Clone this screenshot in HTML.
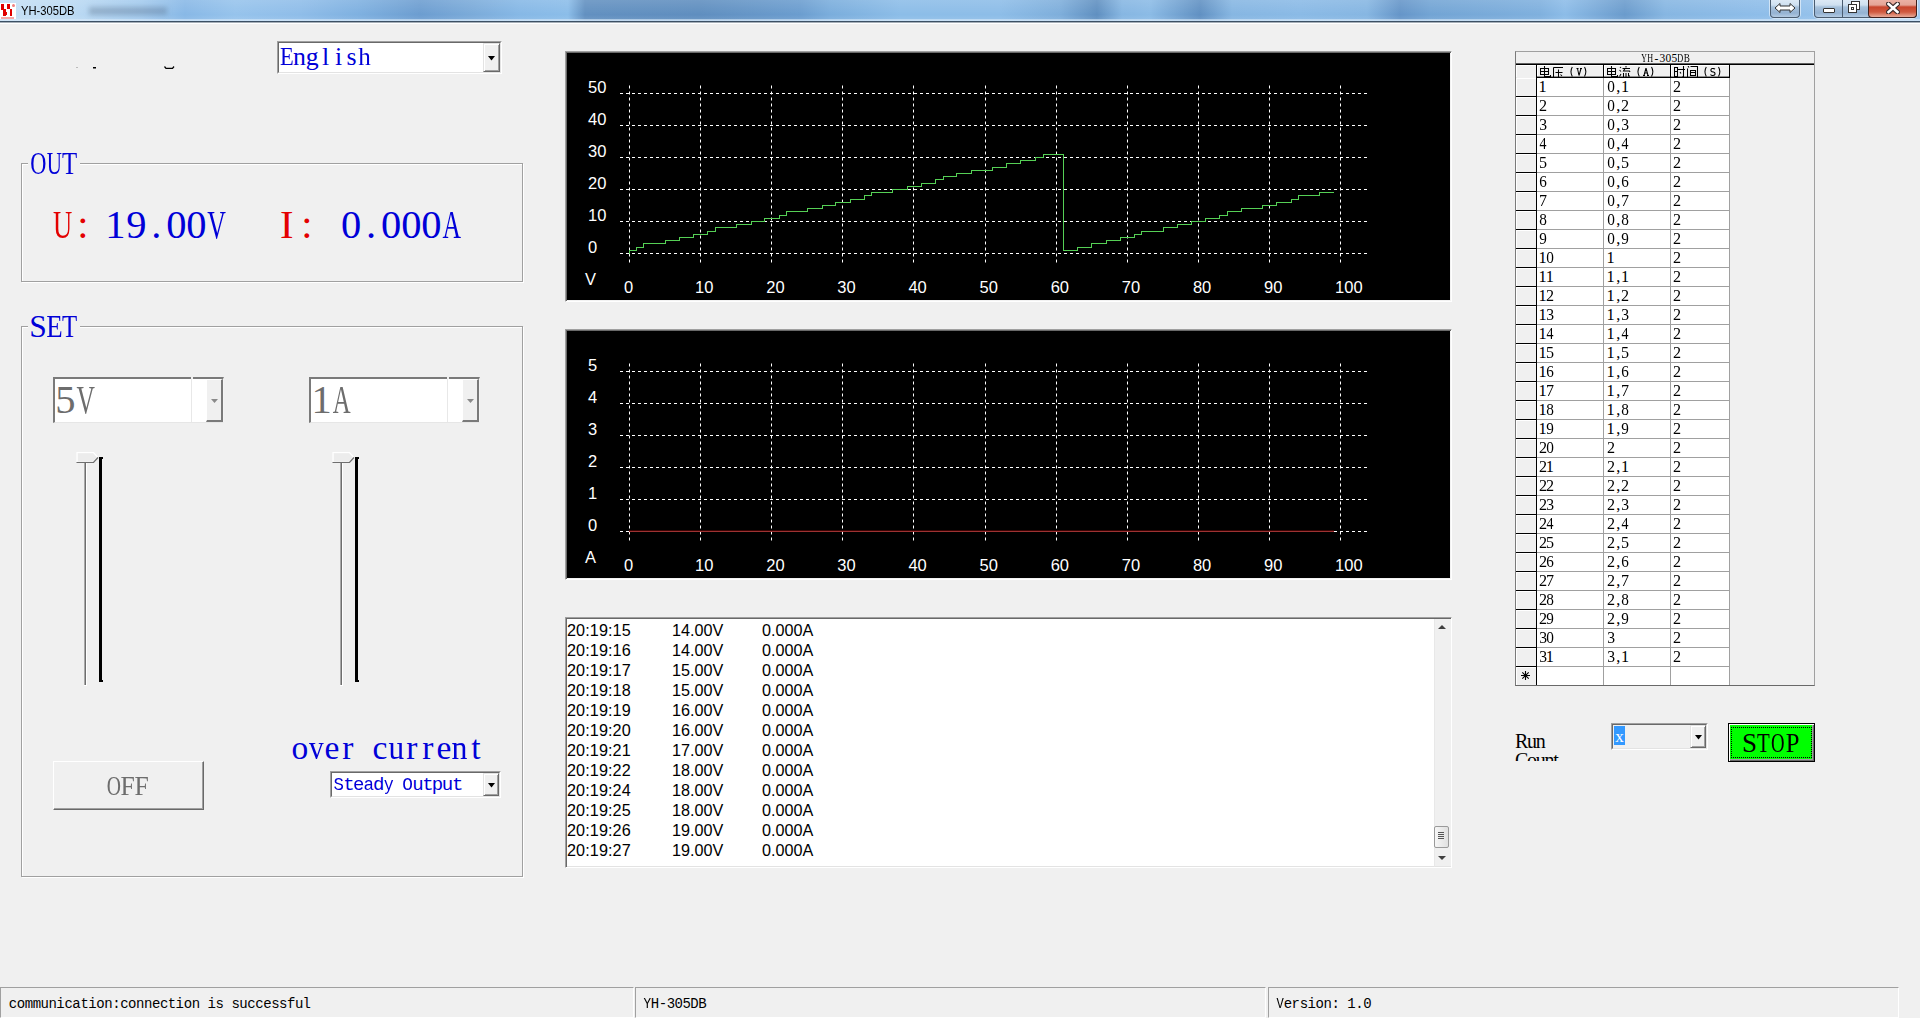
<!DOCTYPE html>
<html><head><meta charset="utf-8"><title>YH-305DB</title><style>
*{margin:0;padding:0;box-sizing:border-box}
html,body{width:1920px;height:1018px;overflow:hidden;background:#f0f0f0;position:relative}
.a{position:absolute}
.sans{font-family:"Liberation Sans",sans-serif}
.serif{font-family:"Liberation Serif",serif}
.mono{font-family:"Liberation Mono",monospace}
.t{position:absolute;white-space:pre;line-height:1}
</style></head><body>
<div class="a" style="left:0px;top:0px;width:1920px;height:21px;background:linear-gradient(90deg,#c6e0f5 0px,#bcdaf3 70px,#a4cbee 140px,#88b8e6 185px,#96c3ec 235px,#8fbde9 300px,#7eb0e0 360px,#6c9dd0 420px,#7aaad9 470px,#86b8e6 520px,#8bbde9 568px,#6290c0 585px,#5f8ebf 700px,#6b9dcf 800px,#7aaddc 830px,#8cbde8 900px,#8dbde8 1000px,#7eaedb 1060px,#5f8fc0 1097px,#86b6e2 1122px,#8bbbe6 1150px,#6090c2 1200px,#86b6e2 1232px,#8abae6 1300px,#86b6e2 1367px,#6595c8 1400px,#72a4d4 1430px,#7fb0de 1540px,#8cbce8 1565px,#6a9bcc 1625px,#86b6e2 1665px,#8ebde9 1760px,#a0c8ee 1920px)"></div>
<div class="a" style="left:0px;top:0px;width:1920px;height:21px;background:linear-gradient(180deg,rgba(255,255,255,0.12),rgba(255,255,255,0) 70%,rgba(255,255,255,0.1))"></div>
<div class="a" style="left:0px;top:19px;width:1920px;height:2px;background:linear-gradient(180deg,rgba(220,236,250,0.5),rgba(210,230,248,0.9))"></div>
<div class="a" style="left:0px;top:21px;width:1920px;height:1px;background:#3c5064"></div>
<div class="a" style="left:0px;top:22px;width:1920px;height:1px;background:#a6afb8"></div>
<div class="a" style="left:0px;top:23px;width:1920px;height:1px;background:#ffffff"></div>
<div class="a" style="left:0;top:3px;width:16px;height:16px;background:#fff"></div>
<svg class="a" style="left:0;top:3px" width="16" height="16"><g fill="#e00000"><rect x="1" y="1" width="3" height="6"/><rect x="7" y="1" width="3" height="5"/><rect x="3" y="6" width="3" height="7"/><rect x="10" y="6" width="2" height="7"/><rect x="5" y="9" width="2" height="3"/></g><circle cx="13.5" cy="2.5" r="1.5" fill="#f08080"/><rect x="1" y="14" width="13" height="2" fill="#f4a8a8"/></svg>
<div class="t sans" style="left:21.00px;top:3.92px;font-size:13.00px;color:#000;transform:scaleX(0.86);transform-origin:0 0">YH-305DB</div>
<div class="a" style="left:89px;top:7px;width:78px;height:8px;background:rgba(70,90,115,0.3);filter:blur(2.5px)"></div>
<div class="a" style="left:1770px;top:-3px;width:30px;height:21px;border:1px solid #4a5c70;border-top:none;border-radius:0 0 4px 4px;background:linear-gradient(180deg,#e4eef8 0,#cfe0f0 40%,#a8c2dc 50%,#94b2d2 80%,#b4cce4 100%);box-shadow:0 0 0 1px rgba(255,255,255,0.55)"></div>
<svg class="a" style="left:1774px;top:2px" width="22" height="12"><path d="M1 6 L6 1.5 V4 H16 V1.5 L21 6 L16 10.5 V8 H6 V10.5 Z" fill="#fff" stroke="#333" stroke-width="1"/></svg>
<div class="a" style="left:1814px;top:-3px;width:103px;height:21px;border:1px solid #4a5c70;border-top:none;border-radius:0 0 4px 4px;background:linear-gradient(180deg,#e4eef8 0,#cfe0f0 40%,#a8c2dc 50%,#94b2d2 80%,#b4cce4 100%);box-shadow:0 0 0 1px rgba(255,255,255,0.55)"></div>
<div class="a" style="left:1842px;top:0px;width:1px;height:17px;background:#4a5c70"></div>
<div class="a" style="left:1868px;top:-3px;width:49px;height:21px;border:1px solid #40201c;border-top:none;border-radius:0 0 4px 4px;background:linear-gradient(180deg,#f0b8ac 0,#e4a496 40%,#c8452c 50%,#d05a40 75%,#e8aa98 100%)"></div>
<div class="a" style="left:1823px;top:8px;width:12px;height:5px;background:#fff;border:1px solid #333;border-radius:1px"></div>
<svg class="a" style="left:1848px;top:1px" width="12" height="13"><rect x="3.5" y="0.5" width="8" height="8" fill="#fff" stroke="#333"/><rect x="0.5" y="3.5" width="8" height="8" fill="#fff" stroke="#333"/><rect x="3.5" y="6.5" width="2" height="2" fill="none" stroke="#333"/></svg>
<svg class="a" style="left:1886px;top:2px" width="14" height="12"><path d="M2.5 2 L11.5 10 M11.5 2 L2.5 10" stroke="#3a2a2a" stroke-width="5" stroke-linecap="round"/><path d="M2.5 2 L11.5 10 M11.5 2 L2.5 10" stroke="#fff" stroke-width="2.6" stroke-linecap="square"/></svg>
<div class="a" style="left:76px;top:67px;width:2px;height:1px;background:#bbb"></div>
<div class="a" style="left:93px;top:67px;width:3px;height:1px;background:#000"></div>
<div class="a" style="left:93px;top:68px;width:3px;height:1px;background:#777"></div>
<svg class="a" style="left:164px;top:66px" width="11" height="4"><path d="M0.5 0.5 L2 2.3 H8.5 L10 0.5" fill="none" stroke="#000" stroke-width="1.3"/></svg>
<div class="a" style="left:277px;top:41px;width:225px;height:33px;background:#fff;border-top:1px solid #a0a0a0;border-left:1px solid #a0a0a0;border-right:1px solid #fff;border-bottom:1px solid #fff"></div>
<div class="a" style="left:278px;top:42px;width:223px;height:31px;background:#fff;border-top:1px solid #696969;border-left:1px solid #696969;border-right:1px solid #e3e3e3;border-bottom:1px solid #e3e3e3"></div>
<div class="a" style="left:483px;top:43px;width:17px;height:29px;background:#f0f0f0;border-top:1px solid #e3e3e3;border-left:1px solid #e3e3e3;border-right:1px solid #696969;border-bottom:1px solid #696969;box-shadow:inset 1px 1px 0 #fff,inset -1px -1px 0 #a0a0a0"></div>
<svg class="a" style="left:488.0px;top:55.5px" width="7" height="5"><path d="M0 0 H7 L3.5 4.5 Z" fill="#000"/></svg>
<div class="t serif" style="left:278.89px;top:43.96px;font-size:25.80px;color:#0000d8;transform:scaleX(0.871);transform-origin:7.61px 0;">E</div>
<div class="t serif" style="left:292.95px;top:43.96px;font-size:25.80px;color:#0000d8;">n</div>
<div class="t serif" style="left:305.74px;top:43.96px;font-size:25.80px;color:#0000d8;">g</div>
<div class="t serif" style="left:321.92px;top:43.96px;font-size:25.80px;color:#0000d8;">l</div>
<div class="t serif" style="left:334.89px;top:43.96px;font-size:25.80px;color:#0000d8;">i</div>
<div class="t serif" style="left:346.42px;top:43.96px;font-size:25.80px;color:#0000d8;">s</div>
<div class="t serif" style="left:358.09px;top:43.96px;font-size:25.80px;color:#0000d8;transform:scaleX(0.972);transform-origin:6.41px 0;">h</div>
<div class="a" style="left:21px;top:163px;width:502px;height:119px;border:1px solid #a0a0a0;box-shadow:1px 1px 0 #fff, inset 1px 1px 0 #fff"></div>
<div class="a" style="left:28px;top:161px;width:52px;height:5px;background:#f0f0f0"></div>
<div class="t serif" style="left:26.68px;top:147.63px;font-size:31.50px;color:#0000d8;transform:scaleX(0.710);transform-origin:11.37px 0;">O</div>
<div class="t serif" style="left:42.58px;top:147.63px;font-size:31.50px;color:#0000d8;transform:scaleX(0.668);transform-origin:11.37px 0;">U</div>
<div class="t serif" style="left:60.21px;top:147.63px;font-size:31.50px;color:#0000d8;transform:scaleX(0.788);transform-origin:9.64px 0;">T</div>
<div class="a" style="left:21px;top:326px;width:502px;height:551px;border:1px solid #a0a0a0;box-shadow:1px 1px 0 #fff, inset 1px 1px 0 #fff"></div>
<div class="a" style="left:28px;top:324px;width:52px;height:5px;background:#f0f0f0"></div>
<div class="t serif" style="left:29.21px;top:310.63px;font-size:31.50px;color:#0000d8;">S</div>
<div class="t serif" style="left:44.66px;top:310.63px;font-size:31.50px;color:#0000d8;transform:scaleX(0.854);transform-origin:9.29px 0;">E</div>
<div class="t serif" style="left:60.21px;top:310.63px;font-size:31.50px;color:#0000d8;transform:scaleX(0.788);transform-origin:9.64px 0;">T</div>
<div class="t serif" style="left:48.23px;top:204.71px;font-size:40.50px;color:#e40000;transform:scaleX(0.657);transform-origin:14.62px 0;">U</div>
<div class="t serif" style="left:77.36px;top:204.71px;font-size:40.50px;color:#e40000;">:</div>
<div class="t serif" style="left:105.36px;top:204.71px;font-size:40.50px;color:#0000d8;">1</div>
<div class="t serif" style="left:126.20px;top:204.71px;font-size:40.50px;color:#0000d8;">9</div>
<div class="t serif" style="left:151.19px;top:204.71px;font-size:40.50px;color:#0000d8;">.</div>
<div class="t serif" style="left:166.23px;top:204.71px;font-size:40.50px;color:#0000d8;">0</div>
<div class="t serif" style="left:186.32px;top:204.71px;font-size:40.50px;color:#0000d8;">0</div>
<div class="t serif" style="left:201.93px;top:204.71px;font-size:40.50px;color:#0000d8;transform:scaleX(0.638);transform-origin:14.62px 0;">V</div>
<div class="t serif" style="left:280.09px;top:204.71px;font-size:40.50px;color:#e40000;">I</div>
<div class="t serif" style="left:301.36px;top:204.71px;font-size:40.50px;color:#e40000;">:</div>
<div class="t serif" style="left:340.93px;top:204.71px;font-size:40.50px;color:#0000d8;">0</div>
<div class="t serif" style="left:366.09px;top:204.71px;font-size:40.50px;color:#0000d8;">.</div>
<div class="t serif" style="left:381.12px;top:204.71px;font-size:40.50px;color:#0000d8;">0</div>
<div class="t serif" style="left:401.23px;top:204.71px;font-size:40.50px;color:#0000d8;">0</div>
<div class="t serif" style="left:421.32px;top:204.71px;font-size:40.50px;color:#0000d8;">0</div>
<div class="t serif" style="left:436.88px;top:204.71px;font-size:40.50px;color:#0000d8;transform:scaleX(0.633);transform-origin:14.67px 0;">A</div>
<div class="a" style="left:53px;top:377px;width:171px;height:46px;background:#fff;border-top:2px solid #7a7a7a;border-left:2px solid #7a7a7a;border-right:1px solid #f4f4f4;border-bottom:1px solid #e6e6e6"></div>
<div class="a" style="left:191px;top:377px;width:2px;height:2px;background:#f0f0f0"></div>
<div class="a" style="left:191px;top:379px;width:1px;height:43px;background:#e8e8e8"></div>
<div class="a" style="left:206px;top:379px;width:17px;height:43px;background:#f0f0f0;border-left:1px solid #fff;border-top:1px solid #fff;border-right:2px solid #7a7a7a;border-bottom:2px solid #7a7a7a"></div>
<svg class="a" style="left:210.5px;top:399px" width="8" height="5"><path d="M0 0 H7 L3.5 4 Z" fill="#8a8a8a"/></svg>
<div class="t serif" style="left:55.19px;top:379.51px;font-size:40.50px;color:#6d6d6d;">5</div>
<div class="t serif" style="left:70.88px;top:379.51px;font-size:40.50px;color:#6d6d6d;transform:scaleX(0.629);transform-origin:14.62px 0;">V</div>
<div class="a" style="left:309px;top:377px;width:171px;height:46px;background:#fff;border-top:2px solid #7a7a7a;border-left:2px solid #7a7a7a;border-right:1px solid #f4f4f4;border-bottom:1px solid #e6e6e6"></div>
<div class="a" style="left:447px;top:377px;width:2px;height:2px;background:#f0f0f0"></div>
<div class="a" style="left:447px;top:379px;width:1px;height:43px;background:#e8e8e8"></div>
<div class="a" style="left:462px;top:379px;width:17px;height:43px;background:#f0f0f0;border-left:1px solid #fff;border-top:1px solid #fff;border-right:2px solid #7a7a7a;border-bottom:2px solid #7a7a7a"></div>
<svg class="a" style="left:466.5px;top:399px" width="8" height="5"><path d="M0 0 H7 L3.5 4 Z" fill="#8a8a8a"/></svg>
<div class="t serif" style="left:311.41px;top:379.51px;font-size:40.50px;color:#6d6d6d;">1</div>
<div class="t serif" style="left:326.83px;top:379.51px;font-size:40.50px;color:#6d6d6d;transform:scaleX(0.611);transform-origin:14.67px 0;">A</div>
<div class="a" style="left:84px;top:462px;width:1px;height:223px;background:#a8a8a8"></div>
<div class="a" style="left:85px;top:462px;width:1px;height:223px;background:#6e6e6e"></div>
<div class="a" style="left:86px;top:462px;width:1px;height:224px;background:#fff"></div>
<div class="a" style="left:84px;top:685px;width:3px;height:1px;background:#fff"></div>
<div class="a" style="left:99px;top:457px;width:3px;height:225px;background:#000"></div>
<div class="a" style="left:102px;top:457px;width:1px;height:2px;background:#000"></div>
<div class="a" style="left:102px;top:680px;width:1px;height:2px;background:#000"></div>
<svg class="a" style="left:76px;top:451px" width="24" height="13"><path d="M1 11 V1.5 H17.5 L21.5 6" fill="#f2f2f2" stroke="#fff" stroke-width="1.2"/><path d="M2 2.5 H17 L20.5 6 L17 10 H2 Z" fill="#ececec"/><path d="M0.5 11.5 H17.5 L22 6.5" fill="none" stroke="#6e6e6e" stroke-width="1.2"/></svg>
<div class="a" style="left:340px;top:462px;width:1px;height:223px;background:#a8a8a8"></div>
<div class="a" style="left:341px;top:462px;width:1px;height:223px;background:#6e6e6e"></div>
<div class="a" style="left:342px;top:462px;width:1px;height:224px;background:#fff"></div>
<div class="a" style="left:340px;top:685px;width:3px;height:1px;background:#fff"></div>
<div class="a" style="left:355px;top:457px;width:3px;height:225px;background:#000"></div>
<div class="a" style="left:358px;top:457px;width:1px;height:2px;background:#000"></div>
<div class="a" style="left:358px;top:680px;width:1px;height:2px;background:#000"></div>
<svg class="a" style="left:332px;top:451px" width="24" height="13"><path d="M1 11 V1.5 H17.5 L21.5 6" fill="#f2f2f2" stroke="#fff" stroke-width="1.2"/><path d="M2 2.5 H17 L20.5 6 L17 10 H2 Z" fill="#ececec"/><path d="M0.5 11.5 H17.5 L22 6.5" fill="none" stroke="#6e6e6e" stroke-width="1.2"/></svg>
<div class="a" style="left:53px;top:761px;width:151px;height:49px;background:#f0f0f0;border-top:1px solid #fff;border-left:1px solid #fff;border-right:1px solid #696969;border-bottom:1px solid #696969;box-shadow:inset -1px -1px 0 #a0a0a0"></div>
<div class="t serif" style="left:103.87px;top:772.05px;font-size:27.50px;color:#6d6d6d;transform:scaleX(0.716);transform-origin:9.93px 0;">O</div>
<div class="t serif" style="left:120.25px;top:772.05px;font-size:27.50px;color:#6d6d6d;transform:scaleX(0.933);transform-origin:7.55px 0;">F</div>
<div class="t serif" style="left:134.25px;top:772.05px;font-size:27.50px;color:#6d6d6d;transform:scaleX(0.933);transform-origin:7.55px 0;">F</div>
<div class="t serif" style="left:291.62px;top:731.27px;font-size:33.50px;color:#0000d8;">o</div>
<div class="t serif" style="left:307.62px;top:731.27px;font-size:33.50px;color:#0000d8;transform:scaleX(0.879);transform-origin:8.38px 0;">v</div>
<div class="t serif" style="left:324.49px;top:731.27px;font-size:33.50px;color:#0000d8;">e</div>
<div class="t serif" style="left:342.23px;top:731.27px;font-size:33.50px;color:#0000d8;">r</div>
<div class="t serif" style="left:372.44px;top:731.27px;font-size:33.50px;color:#0000d8;">c</div>
<div class="t serif" style="left:387.69px;top:731.27px;font-size:33.50px;color:#0000d8;transform:scaleX(0.935);transform-origin:8.31px 0;">u</div>
<div class="t serif" style="left:406.23px;top:731.27px;font-size:33.50px;color:#0000d8;">r</div>
<div class="t serif" style="left:422.23px;top:731.27px;font-size:33.50px;color:#0000d8;">r</div>
<div class="t serif" style="left:436.49px;top:731.27px;font-size:33.50px;color:#0000d8;">e</div>
<div class="t serif" style="left:451.49px;top:731.27px;font-size:33.50px;color:#0000d8;transform:scaleX(0.951);transform-origin:8.51px 0;">n</div>
<div class="t serif" style="left:471.28px;top:731.27px;font-size:33.50px;color:#0000d8;">t</div>
<div class="a" style="left:330px;top:771px;width:171px;height:27px;background:#fff;border-top:1px solid #a0a0a0;border-left:1px solid #a0a0a0;border-right:1px solid #fff;border-bottom:1px solid #fff"></div>
<div class="a" style="left:331px;top:772px;width:169px;height:25px;background:#fff;border-top:1px solid #696969;border-left:1px solid #696969;border-right:1px solid #e3e3e3;border-bottom:1px solid #e3e3e3"></div>
<div class="a" style="left:483px;top:773px;width:16px;height:23px;background:#f0f0f0;border-top:1px solid #e3e3e3;border-left:1px solid #e3e3e3;border-right:1px solid #696969;border-bottom:1px solid #696969;box-shadow:inset 1px 1px 0 #fff,inset -1px -1px 0 #a0a0a0"></div>
<svg class="a" style="left:487.5px;top:782.5px" width="7" height="5"><path d="M0 0 H7 L3.5 4.5 Z" fill="#000"/></svg>
<div class="t mono" style="left:333.34px;top:775.50px;font-size:19.00px;color:#0000d8;transform:scaleX(0.914);transform-origin:5.60px 0;">S</div>
<div class="t mono" style="left:343.22px;top:775.50px;font-size:19.00px;color:#0000d8;">t</div>
<div class="t mono" style="left:353.01px;top:775.50px;font-size:19.00px;color:#0000d8;transform:scaleX(0.997);transform-origin:5.69px 0;">e</div>
<div class="t mono" style="left:362.61px;top:775.50px;font-size:19.00px;color:#0000d8;transform:scaleX(0.929);transform-origin:5.97px 0;">a</div>
<div class="t mono" style="left:372.95px;top:775.50px;font-size:19.00px;color:#0000d8;">d</div>
<div class="t mono" style="left:382.65px;top:775.50px;font-size:19.00px;color:#0000d8;transform:scaleX(0.875);transform-origin:5.69px 0;">y</div>
<div class="t mono" style="left:402.40px;top:775.50px;font-size:19.00px;color:#0000d8;transform:scaleX(0.936);transform-origin:5.70px 0;">O</div>
<div class="t mono" style="left:412.23px;top:775.50px;font-size:19.00px;color:#0000d8;">u</div>
<div class="t mono" style="left:422.26px;top:775.50px;font-size:19.00px;color:#0000d8;">t</div>
<div class="t mono" style="left:431.85px;top:775.50px;font-size:19.00px;color:#0000d8;">p</div>
<div class="t mono" style="left:441.87px;top:775.50px;font-size:19.00px;color:#0000d8;">u</div>
<div class="t mono" style="left:451.90px;top:775.50px;font-size:19.00px;color:#0000d8;">t</div>
<div class="a" style="left:565px;top:51px;width:887px;height:251px;background:#000;border-top:1px solid #a0a0a0;border-left:1px solid #a0a0a0;border-right:1px solid #fff;border-bottom:1px solid #fff;box-shadow:inset 1px 1px 0 #696969,inset -1px -1px 0 #f2f2f2"></div>
<svg class="a" style="left:0;top:0" width="1920" height="1018">
<line x1="620" y1="253.5" x2="1368" y2="253.5" stroke="#fff" stroke-width="1" stroke-dasharray="3,3"/>
<line x1="620" y1="221.5" x2="1368" y2="221.5" stroke="#fff" stroke-width="1" stroke-dasharray="3,3"/>
<line x1="620" y1="189.5" x2="1368" y2="189.5" stroke="#fff" stroke-width="1" stroke-dasharray="3,3"/>
<line x1="620" y1="157.5" x2="1368" y2="157.5" stroke="#fff" stroke-width="1" stroke-dasharray="3,3"/>
<line x1="620" y1="125.5" x2="1368" y2="125.5" stroke="#fff" stroke-width="1" stroke-dasharray="3,3"/>
<line x1="620" y1="93.5" x2="1368" y2="93.5" stroke="#fff" stroke-width="1" stroke-dasharray="3,3"/>
<line x1="629.5" y1="85.5" x2="629.5" y2="263" stroke="#fff" stroke-width="1" stroke-dasharray="3,3"/>
<line x1="700.5" y1="85.5" x2="700.5" y2="263" stroke="#fff" stroke-width="1" stroke-dasharray="3,3"/>
<line x1="771.5" y1="85.5" x2="771.5" y2="263" stroke="#fff" stroke-width="1" stroke-dasharray="3,3"/>
<line x1="842.5" y1="85.5" x2="842.5" y2="263" stroke="#fff" stroke-width="1" stroke-dasharray="3,3"/>
<line x1="913.5" y1="85.5" x2="913.5" y2="263" stroke="#fff" stroke-width="1" stroke-dasharray="3,3"/>
<line x1="985.5" y1="85.5" x2="985.5" y2="263" stroke="#fff" stroke-width="1" stroke-dasharray="3,3"/>
<line x1="1056.5" y1="85.5" x2="1056.5" y2="263" stroke="#fff" stroke-width="1" stroke-dasharray="3,3"/>
<line x1="1127.5" y1="85.5" x2="1127.5" y2="263" stroke="#fff" stroke-width="1" stroke-dasharray="3,3"/>
<line x1="1198.5" y1="85.5" x2="1198.5" y2="263" stroke="#fff" stroke-width="1" stroke-dasharray="3,3"/>
<line x1="1269.5" y1="85.5" x2="1269.5" y2="263" stroke="#fff" stroke-width="1" stroke-dasharray="3,3"/>
<line x1="1340.5" y1="85.5" x2="1340.5" y2="263" stroke="#fff" stroke-width="1" stroke-dasharray="3,3"/>
<path d="M629.5,253.5 L629.5,250.5 L636.5,250.5 L636.5,247.5 L643.5,247.5 L643.5,243.5 L665.5,243.5 L665.5,240.5 L679.5,240.5 L679.5,237.5 L693.5,237.5 L693.5,234.5 L707.5,234.5 L707.5,231.5 L715.5,231.5 L715.5,227.5 L736.5,227.5 L736.5,224.5 L751.5,224.5 L751.5,221.5 L764.5,221.5 L764.5,218.5 L779.5,218.5 L779.5,215.5 L786.5,215.5 L786.5,211.5 L807.5,211.5 L807.5,208.5 L822.5,208.5 L822.5,205.5 L835.5,205.5 L835.5,202.5 L850.5,202.5 L850.5,199.5 L864.5,199.5 L864.5,195.5 L871.5,195.5 L871.5,192.5 L892.5,192.5 L892.5,189.5 L907.5,189.5 L907.5,186.5 L921.5,186.5 L921.5,183.5 L935.5,183.5 L935.5,179.5 L943.5,179.5 L943.5,176.5 L956.5,176.5 L956.5,173.5 L971.5,173.5 L971.5,170.5 L992.5,170.5 L992.5,167.5 L1006.5,167.5 L1006.5,163.5 L1020.5,163.5 L1020.5,160.5 L1035.5,160.5 L1035.5,157.5 L1043.5,157.5 L1043.5,154.5 L1063.5,154.5 L1063.5,250.5 L1077.5,250.5 L1077.5,247.5 L1091.5,247.5 L1091.5,243.5 L1106.5,243.5 L1106.5,240.5 L1120.5,240.5 L1120.5,237.5 L1134.5,237.5 L1134.5,234.5 L1141.5,234.5 L1141.5,231.5 L1163.5,231.5 L1163.5,227.5 L1177.5,227.5 L1177.5,224.5 L1191.5,224.5 L1191.5,221.5 L1205.5,221.5 L1205.5,218.5 L1219.5,218.5 L1219.5,215.5 L1227.5,215.5 L1227.5,211.5 L1241.5,211.5 L1241.5,208.5 L1262.5,208.5 L1262.5,205.5 L1276.5,205.5 L1276.5,202.5 L1291.5,202.5 L1291.5,199.5 L1298.5,199.5 L1298.5,195.5 L1319.5,195.5 L1319.5,192.5 L1333.5,192.5" fill="none" stroke="#55d055" stroke-width="1" shape-rendering="crispEdges"/>
</svg>
<div class="t sans" style="left:588.00px;top:238.66px;font-size:16.50px;color:#fff;">0</div>
<div class="t sans" style="left:588.00px;top:206.66px;font-size:16.50px;color:#fff;">10</div>
<div class="t sans" style="left:588.00px;top:174.66px;font-size:16.50px;color:#fff;">20</div>
<div class="t sans" style="left:588.00px;top:142.66px;font-size:16.50px;color:#fff;">30</div>
<div class="t sans" style="left:588.00px;top:110.66px;font-size:16.50px;color:#fff;">40</div>
<div class="t sans" style="left:588.00px;top:78.66px;font-size:16.50px;color:#fff;">50</div>
<div class="t sans" style="left:585.00px;top:271.36px;font-size:16.50px;color:#fff;">V</div>
<div class="t sans" style="left:624.00px;top:278.86px;font-size:16.50px;color:#fff;">0</div>
<div class="t sans" style="left:695.11px;top:278.86px;font-size:16.50px;color:#fff;">10</div>
<div class="t sans" style="left:766.22px;top:278.86px;font-size:16.50px;color:#fff;">20</div>
<div class="t sans" style="left:837.33px;top:278.86px;font-size:16.50px;color:#fff;">30</div>
<div class="t sans" style="left:908.44px;top:278.86px;font-size:16.50px;color:#fff;">40</div>
<div class="t sans" style="left:979.55px;top:278.86px;font-size:16.50px;color:#fff;">50</div>
<div class="t sans" style="left:1050.66px;top:278.86px;font-size:16.50px;color:#fff;">60</div>
<div class="t sans" style="left:1121.77px;top:278.86px;font-size:16.50px;color:#fff;">70</div>
<div class="t sans" style="left:1192.88px;top:278.86px;font-size:16.50px;color:#fff;">80</div>
<div class="t sans" style="left:1263.99px;top:278.86px;font-size:16.50px;color:#fff;">90</div>
<div class="t sans" style="left:1335.10px;top:278.86px;font-size:16.50px;color:#fff;">100</div>
<div class="a" style="left:565px;top:329px;width:887px;height:251px;background:#000;border-top:1px solid #a0a0a0;border-left:1px solid #a0a0a0;border-right:1px solid #fff;border-bottom:1px solid #fff;box-shadow:inset 1px 1px 0 #696969,inset -1px -1px 0 #f2f2f2"></div>
<svg class="a" style="left:0;top:0" width="1920" height="1018">
<line x1="620" y1="531.5" x2="1368" y2="531.5" stroke="#fff" stroke-width="1" stroke-dasharray="3,3"/>
<line x1="620" y1="499.5" x2="1368" y2="499.5" stroke="#fff" stroke-width="1" stroke-dasharray="3,3"/>
<line x1="620" y1="467.5" x2="1368" y2="467.5" stroke="#fff" stroke-width="1" stroke-dasharray="3,3"/>
<line x1="620" y1="435.5" x2="1368" y2="435.5" stroke="#fff" stroke-width="1" stroke-dasharray="3,3"/>
<line x1="620" y1="403.5" x2="1368" y2="403.5" stroke="#fff" stroke-width="1" stroke-dasharray="3,3"/>
<line x1="620" y1="371.5" x2="1368" y2="371.5" stroke="#fff" stroke-width="1" stroke-dasharray="3,3"/>
<line x1="629.5" y1="363.5" x2="629.5" y2="541" stroke="#fff" stroke-width="1" stroke-dasharray="3,3"/>
<line x1="700.5" y1="363.5" x2="700.5" y2="541" stroke="#fff" stroke-width="1" stroke-dasharray="3,3"/>
<line x1="771.5" y1="363.5" x2="771.5" y2="541" stroke="#fff" stroke-width="1" stroke-dasharray="3,3"/>
<line x1="842.5" y1="363.5" x2="842.5" y2="541" stroke="#fff" stroke-width="1" stroke-dasharray="3,3"/>
<line x1="913.5" y1="363.5" x2="913.5" y2="541" stroke="#fff" stroke-width="1" stroke-dasharray="3,3"/>
<line x1="985.5" y1="363.5" x2="985.5" y2="541" stroke="#fff" stroke-width="1" stroke-dasharray="3,3"/>
<line x1="1056.5" y1="363.5" x2="1056.5" y2="541" stroke="#fff" stroke-width="1" stroke-dasharray="3,3"/>
<line x1="1127.5" y1="363.5" x2="1127.5" y2="541" stroke="#fff" stroke-width="1" stroke-dasharray="3,3"/>
<line x1="1198.5" y1="363.5" x2="1198.5" y2="541" stroke="#fff" stroke-width="1" stroke-dasharray="3,3"/>
<line x1="1269.5" y1="363.5" x2="1269.5" y2="541" stroke="#fff" stroke-width="1" stroke-dasharray="3,3"/>
<line x1="1340.5" y1="363.5" x2="1340.5" y2="541" stroke="#fff" stroke-width="1" stroke-dasharray="3,3"/>
<rect x="629" y="530" width="705" height="1" fill="#3a0404"/><rect x="629" y="531" width="705" height="1" fill="#9e3232"/>
</svg>
<div class="t sans" style="left:588.00px;top:516.66px;font-size:16.50px;color:#fff;">0</div>
<div class="t sans" style="left:588.00px;top:484.66px;font-size:16.50px;color:#fff;">1</div>
<div class="t sans" style="left:588.00px;top:452.66px;font-size:16.50px;color:#fff;">2</div>
<div class="t sans" style="left:588.00px;top:420.66px;font-size:16.50px;color:#fff;">3</div>
<div class="t sans" style="left:588.00px;top:388.66px;font-size:16.50px;color:#fff;">4</div>
<div class="t sans" style="left:588.00px;top:356.66px;font-size:16.50px;color:#fff;">5</div>
<div class="t sans" style="left:585.00px;top:549.36px;font-size:16.50px;color:#fff;">A</div>
<div class="t sans" style="left:624.00px;top:556.86px;font-size:16.50px;color:#fff;">0</div>
<div class="t sans" style="left:695.11px;top:556.86px;font-size:16.50px;color:#fff;">10</div>
<div class="t sans" style="left:766.22px;top:556.86px;font-size:16.50px;color:#fff;">20</div>
<div class="t sans" style="left:837.33px;top:556.86px;font-size:16.50px;color:#fff;">30</div>
<div class="t sans" style="left:908.44px;top:556.86px;font-size:16.50px;color:#fff;">40</div>
<div class="t sans" style="left:979.55px;top:556.86px;font-size:16.50px;color:#fff;">50</div>
<div class="t sans" style="left:1050.66px;top:556.86px;font-size:16.50px;color:#fff;">60</div>
<div class="t sans" style="left:1121.77px;top:556.86px;font-size:16.50px;color:#fff;">70</div>
<div class="t sans" style="left:1192.88px;top:556.86px;font-size:16.50px;color:#fff;">80</div>
<div class="t sans" style="left:1263.99px;top:556.86px;font-size:16.50px;color:#fff;">90</div>
<div class="t sans" style="left:1335.10px;top:556.86px;font-size:16.50px;color:#fff;">100</div>
<div class="a" style="left:565px;top:617px;width:887px;height:251px;background:#fff;border-top:1px solid #a0a0a0;border-left:1px solid #a0a0a0;border-right:1px solid #fff;border-bottom:1px solid #fff;box-shadow:inset 1px 1px 0 #696969,inset -1px -1px 0 #e3e3e3"></div>
<div class="t sans" style="left:567.00px;top:621.81px;font-size:16.20px;color:#000;letter-spacing:0.1px">20:19:15</div>
<div class="t sans" style="left:672.00px;top:621.81px;font-size:16.20px;color:#000;">14.00V</div>
<div class="t sans" style="left:762.00px;top:621.81px;font-size:16.20px;color:#000;">0.000A</div>
<div class="t sans" style="left:567.00px;top:641.81px;font-size:16.20px;color:#000;letter-spacing:0.1px">20:19:16</div>
<div class="t sans" style="left:672.00px;top:641.81px;font-size:16.20px;color:#000;">14.00V</div>
<div class="t sans" style="left:762.00px;top:641.81px;font-size:16.20px;color:#000;">0.000A</div>
<div class="t sans" style="left:567.00px;top:661.81px;font-size:16.20px;color:#000;letter-spacing:0.1px">20:19:17</div>
<div class="t sans" style="left:672.00px;top:661.81px;font-size:16.20px;color:#000;">15.00V</div>
<div class="t sans" style="left:762.00px;top:661.81px;font-size:16.20px;color:#000;">0.000A</div>
<div class="t sans" style="left:567.00px;top:681.81px;font-size:16.20px;color:#000;letter-spacing:0.1px">20:19:18</div>
<div class="t sans" style="left:672.00px;top:681.81px;font-size:16.20px;color:#000;">15.00V</div>
<div class="t sans" style="left:762.00px;top:681.81px;font-size:16.20px;color:#000;">0.000A</div>
<div class="t sans" style="left:567.00px;top:701.81px;font-size:16.20px;color:#000;letter-spacing:0.1px">20:19:19</div>
<div class="t sans" style="left:672.00px;top:701.81px;font-size:16.20px;color:#000;">16.00V</div>
<div class="t sans" style="left:762.00px;top:701.81px;font-size:16.20px;color:#000;">0.000A</div>
<div class="t sans" style="left:567.00px;top:721.81px;font-size:16.20px;color:#000;letter-spacing:0.1px">20:19:20</div>
<div class="t sans" style="left:672.00px;top:721.81px;font-size:16.20px;color:#000;">16.00V</div>
<div class="t sans" style="left:762.00px;top:721.81px;font-size:16.20px;color:#000;">0.000A</div>
<div class="t sans" style="left:567.00px;top:741.81px;font-size:16.20px;color:#000;letter-spacing:0.1px">20:19:21</div>
<div class="t sans" style="left:672.00px;top:741.81px;font-size:16.20px;color:#000;">17.00V</div>
<div class="t sans" style="left:762.00px;top:741.81px;font-size:16.20px;color:#000;">0.000A</div>
<div class="t sans" style="left:567.00px;top:761.81px;font-size:16.20px;color:#000;letter-spacing:0.1px">20:19:22</div>
<div class="t sans" style="left:672.00px;top:761.81px;font-size:16.20px;color:#000;">18.00V</div>
<div class="t sans" style="left:762.00px;top:761.81px;font-size:16.20px;color:#000;">0.000A</div>
<div class="t sans" style="left:567.00px;top:781.81px;font-size:16.20px;color:#000;letter-spacing:0.1px">20:19:24</div>
<div class="t sans" style="left:672.00px;top:781.81px;font-size:16.20px;color:#000;">18.00V</div>
<div class="t sans" style="left:762.00px;top:781.81px;font-size:16.20px;color:#000;">0.000A</div>
<div class="t sans" style="left:567.00px;top:801.81px;font-size:16.20px;color:#000;letter-spacing:0.1px">20:19:25</div>
<div class="t sans" style="left:672.00px;top:801.81px;font-size:16.20px;color:#000;">18.00V</div>
<div class="t sans" style="left:762.00px;top:801.81px;font-size:16.20px;color:#000;">0.000A</div>
<div class="t sans" style="left:567.00px;top:821.81px;font-size:16.20px;color:#000;letter-spacing:0.1px">20:19:26</div>
<div class="t sans" style="left:672.00px;top:821.81px;font-size:16.20px;color:#000;">19.00V</div>
<div class="t sans" style="left:762.00px;top:821.81px;font-size:16.20px;color:#000;">0.000A</div>
<div class="t sans" style="left:567.00px;top:841.81px;font-size:16.20px;color:#000;letter-spacing:0.1px">20:19:27</div>
<div class="t sans" style="left:672.00px;top:841.81px;font-size:16.20px;color:#000;">19.00V</div>
<div class="t sans" style="left:762.00px;top:841.81px;font-size:16.20px;color:#000;">0.000A</div>
<div class="a" style="left:1434px;top:619px;width:17px;height:248px;background:#f0f0f0;border-left:1px solid #e8e8e8;border-bottom:1px solid #e3e3e3"></div>
<div class="a" style="left:1438px;top:625px;width:0;height:0;border-left:4px solid transparent;border-right:4px solid transparent;border-bottom:4px solid #404040"></div>
<div class="a" style="left:1438px;top:856px;width:0;height:0;border-left:4px solid transparent;border-right:4px solid transparent;border-top:4px solid #404040"></div>
<div class="a" style="left:1434px;top:826px;width:15px;height:22px;background:linear-gradient(90deg,#f6f6f6,#e0e0e0);border:1px solid #9a9a9a;border-radius:2px"></div>
<div class="a" style="left:1438px;top:832px;width:6px;height:1px;background:#555"></div>
<div class="a" style="left:1438px;top:834px;width:6px;height:1px;background:#555"></div>
<div class="a" style="left:1438px;top:836px;width:6px;height:1px;background:#555"></div>
<div class="a" style="left:1438px;top:838px;width:6px;height:1px;background:#555"></div>
<div class="a" style="left:1515px;top:51px;width:300px;height:635px;background:#f0f0f0;border:1px solid #a0a0a0;border-left-color:#7a7a7a;border-bottom-color:#696969"></div>
<div class="a" style="left:1516px;top:63px;width:298px;height:1px;background:#606060"></div>
<div class="a" style="left:1516px;top:64px;width:298px;height:1px;background:#000"></div>
<div class="t serif" style="left:1640.43px;top:53.13px;font-size:11.50px;color:#000;transform:scaleX(0.685);transform-origin:4.07px 0;">Y</div>
<div class="t serif" style="left:1646.35px;top:53.13px;font-size:11.50px;color:#000;transform:scaleX(0.707);transform-origin:4.15px 0;">H</div>
<div class="t serif" style="left:1654.58px;top:53.13px;font-size:11.50px;color:#000;">-</div>
<div class="t serif" style="left:1659.57px;top:53.13px;font-size:11.50px;color:#000;">3</div>
<div class="t serif" style="left:1665.62px;top:53.13px;font-size:11.50px;color:#000;">0</div>
<div class="t serif" style="left:1671.52px;top:53.13px;font-size:11.50px;color:#000;">5</div>
<div class="t serif" style="left:1676.41px;top:53.13px;font-size:11.50px;color:#000;transform:scaleX(0.719);transform-origin:4.09px 0;">D</div>
<div class="t serif" style="left:1682.78px;top:53.13px;font-size:11.50px;color:#000;transform:scaleX(0.797);transform-origin:3.72px 0;">B</div>
<div class="a" style="left:1536px;top:76px;width:194px;height:1px;background:#909090"></div>
<div class="a" style="left:1536px;top:77px;width:194px;height:1px;background:#000"></div>
<div class="a" style="left:1729px;top:65px;width:1px;height:12px;background:#000"></div>
<div class="a" style="left:1537px;top:78px;width:193px;height:607px;background:#fff"></div>
<div class="a" style="left:1537px;top:96px;width:193px;height:1px;background:#a0a0a0"></div>
<div class="a" style="left:1516px;top:96px;width:21px;height:1px;background:#000"></div>
<div class="a" style="left:1537px;top:115px;width:193px;height:1px;background:#a0a0a0"></div>
<div class="a" style="left:1516px;top:115px;width:21px;height:1px;background:#000"></div>
<div class="a" style="left:1537px;top:134px;width:193px;height:1px;background:#a0a0a0"></div>
<div class="a" style="left:1516px;top:134px;width:21px;height:1px;background:#000"></div>
<div class="a" style="left:1537px;top:153px;width:193px;height:1px;background:#a0a0a0"></div>
<div class="a" style="left:1516px;top:153px;width:21px;height:1px;background:#000"></div>
<div class="a" style="left:1537px;top:172px;width:193px;height:1px;background:#a0a0a0"></div>
<div class="a" style="left:1516px;top:172px;width:21px;height:1px;background:#000"></div>
<div class="a" style="left:1537px;top:191px;width:193px;height:1px;background:#a0a0a0"></div>
<div class="a" style="left:1516px;top:191px;width:21px;height:1px;background:#000"></div>
<div class="a" style="left:1537px;top:210px;width:193px;height:1px;background:#a0a0a0"></div>
<div class="a" style="left:1516px;top:210px;width:21px;height:1px;background:#000"></div>
<div class="a" style="left:1537px;top:229px;width:193px;height:1px;background:#a0a0a0"></div>
<div class="a" style="left:1516px;top:229px;width:21px;height:1px;background:#000"></div>
<div class="a" style="left:1537px;top:248px;width:193px;height:1px;background:#a0a0a0"></div>
<div class="a" style="left:1516px;top:248px;width:21px;height:1px;background:#000"></div>
<div class="a" style="left:1537px;top:267px;width:193px;height:1px;background:#a0a0a0"></div>
<div class="a" style="left:1516px;top:267px;width:21px;height:1px;background:#000"></div>
<div class="a" style="left:1537px;top:286px;width:193px;height:1px;background:#a0a0a0"></div>
<div class="a" style="left:1516px;top:286px;width:21px;height:1px;background:#000"></div>
<div class="a" style="left:1537px;top:305px;width:193px;height:1px;background:#a0a0a0"></div>
<div class="a" style="left:1516px;top:305px;width:21px;height:1px;background:#000"></div>
<div class="a" style="left:1537px;top:324px;width:193px;height:1px;background:#a0a0a0"></div>
<div class="a" style="left:1516px;top:324px;width:21px;height:1px;background:#000"></div>
<div class="a" style="left:1537px;top:343px;width:193px;height:1px;background:#a0a0a0"></div>
<div class="a" style="left:1516px;top:343px;width:21px;height:1px;background:#000"></div>
<div class="a" style="left:1537px;top:362px;width:193px;height:1px;background:#a0a0a0"></div>
<div class="a" style="left:1516px;top:362px;width:21px;height:1px;background:#000"></div>
<div class="a" style="left:1537px;top:381px;width:193px;height:1px;background:#a0a0a0"></div>
<div class="a" style="left:1516px;top:381px;width:21px;height:1px;background:#000"></div>
<div class="a" style="left:1537px;top:400px;width:193px;height:1px;background:#a0a0a0"></div>
<div class="a" style="left:1516px;top:400px;width:21px;height:1px;background:#000"></div>
<div class="a" style="left:1537px;top:419px;width:193px;height:1px;background:#a0a0a0"></div>
<div class="a" style="left:1516px;top:419px;width:21px;height:1px;background:#000"></div>
<div class="a" style="left:1537px;top:438px;width:193px;height:1px;background:#a0a0a0"></div>
<div class="a" style="left:1516px;top:438px;width:21px;height:1px;background:#000"></div>
<div class="a" style="left:1537px;top:457px;width:193px;height:1px;background:#a0a0a0"></div>
<div class="a" style="left:1516px;top:457px;width:21px;height:1px;background:#000"></div>
<div class="a" style="left:1537px;top:476px;width:193px;height:1px;background:#a0a0a0"></div>
<div class="a" style="left:1516px;top:476px;width:21px;height:1px;background:#000"></div>
<div class="a" style="left:1537px;top:495px;width:193px;height:1px;background:#a0a0a0"></div>
<div class="a" style="left:1516px;top:495px;width:21px;height:1px;background:#000"></div>
<div class="a" style="left:1537px;top:514px;width:193px;height:1px;background:#a0a0a0"></div>
<div class="a" style="left:1516px;top:514px;width:21px;height:1px;background:#000"></div>
<div class="a" style="left:1537px;top:533px;width:193px;height:1px;background:#a0a0a0"></div>
<div class="a" style="left:1516px;top:533px;width:21px;height:1px;background:#000"></div>
<div class="a" style="left:1537px;top:552px;width:193px;height:1px;background:#a0a0a0"></div>
<div class="a" style="left:1516px;top:552px;width:21px;height:1px;background:#000"></div>
<div class="a" style="left:1537px;top:571px;width:193px;height:1px;background:#a0a0a0"></div>
<div class="a" style="left:1516px;top:571px;width:21px;height:1px;background:#000"></div>
<div class="a" style="left:1537px;top:590px;width:193px;height:1px;background:#a0a0a0"></div>
<div class="a" style="left:1516px;top:590px;width:21px;height:1px;background:#000"></div>
<div class="a" style="left:1537px;top:609px;width:193px;height:1px;background:#a0a0a0"></div>
<div class="a" style="left:1516px;top:609px;width:21px;height:1px;background:#000"></div>
<div class="a" style="left:1537px;top:628px;width:193px;height:1px;background:#a0a0a0"></div>
<div class="a" style="left:1516px;top:628px;width:21px;height:1px;background:#000"></div>
<div class="a" style="left:1537px;top:647px;width:193px;height:1px;background:#a0a0a0"></div>
<div class="a" style="left:1516px;top:647px;width:21px;height:1px;background:#000"></div>
<div class="a" style="left:1537px;top:666px;width:193px;height:1px;background:#a0a0a0"></div>
<div class="a" style="left:1516px;top:666px;width:21px;height:1px;background:#000"></div>
<div class="a" style="left:1603px;top:78px;width:1px;height:607px;background:#a0a0a0"></div>
<div class="a" style="left:1670px;top:78px;width:1px;height:607px;background:#a0a0a0"></div>
<div class="a" style="left:1729px;top:78px;width:1px;height:607px;background:#a0a0a0"></div>
<div class="a" style="left:1536px;top:65px;width:1px;height:620px;background:#000"></div>
<div class="a" style="left:1516px;top:65px;width:20px;height:12px;border-top:1px solid #fff;border-left:1px solid #fff"></div>
<div class="a" style="left:1516px;top:78px;width:20px;height:18px;border-top:1px solid #fff;border-left:1px solid #fff"></div>
<div class="a" style="left:1516px;top:97px;width:20px;height:18px;border-top:1px solid #fff;border-left:1px solid #fff"></div>
<div class="a" style="left:1516px;top:116px;width:20px;height:18px;border-top:1px solid #fff;border-left:1px solid #fff"></div>
<div class="a" style="left:1516px;top:135px;width:20px;height:18px;border-top:1px solid #fff;border-left:1px solid #fff"></div>
<div class="a" style="left:1516px;top:154px;width:20px;height:18px;border-top:1px solid #fff;border-left:1px solid #fff"></div>
<div class="a" style="left:1516px;top:173px;width:20px;height:18px;border-top:1px solid #fff;border-left:1px solid #fff"></div>
<div class="a" style="left:1516px;top:192px;width:20px;height:18px;border-top:1px solid #fff;border-left:1px solid #fff"></div>
<div class="a" style="left:1516px;top:211px;width:20px;height:18px;border-top:1px solid #fff;border-left:1px solid #fff"></div>
<div class="a" style="left:1516px;top:230px;width:20px;height:18px;border-top:1px solid #fff;border-left:1px solid #fff"></div>
<div class="a" style="left:1516px;top:249px;width:20px;height:18px;border-top:1px solid #fff;border-left:1px solid #fff"></div>
<div class="a" style="left:1516px;top:268px;width:20px;height:18px;border-top:1px solid #fff;border-left:1px solid #fff"></div>
<div class="a" style="left:1516px;top:287px;width:20px;height:18px;border-top:1px solid #fff;border-left:1px solid #fff"></div>
<div class="a" style="left:1516px;top:306px;width:20px;height:18px;border-top:1px solid #fff;border-left:1px solid #fff"></div>
<div class="a" style="left:1516px;top:325px;width:20px;height:18px;border-top:1px solid #fff;border-left:1px solid #fff"></div>
<div class="a" style="left:1516px;top:344px;width:20px;height:18px;border-top:1px solid #fff;border-left:1px solid #fff"></div>
<div class="a" style="left:1516px;top:363px;width:20px;height:18px;border-top:1px solid #fff;border-left:1px solid #fff"></div>
<div class="a" style="left:1516px;top:382px;width:20px;height:18px;border-top:1px solid #fff;border-left:1px solid #fff"></div>
<div class="a" style="left:1516px;top:401px;width:20px;height:18px;border-top:1px solid #fff;border-left:1px solid #fff"></div>
<div class="a" style="left:1516px;top:420px;width:20px;height:18px;border-top:1px solid #fff;border-left:1px solid #fff"></div>
<div class="a" style="left:1516px;top:439px;width:20px;height:18px;border-top:1px solid #fff;border-left:1px solid #fff"></div>
<div class="a" style="left:1516px;top:458px;width:20px;height:18px;border-top:1px solid #fff;border-left:1px solid #fff"></div>
<div class="a" style="left:1516px;top:477px;width:20px;height:18px;border-top:1px solid #fff;border-left:1px solid #fff"></div>
<div class="a" style="left:1516px;top:496px;width:20px;height:18px;border-top:1px solid #fff;border-left:1px solid #fff"></div>
<div class="a" style="left:1516px;top:515px;width:20px;height:18px;border-top:1px solid #fff;border-left:1px solid #fff"></div>
<div class="a" style="left:1516px;top:534px;width:20px;height:18px;border-top:1px solid #fff;border-left:1px solid #fff"></div>
<div class="a" style="left:1516px;top:553px;width:20px;height:18px;border-top:1px solid #fff;border-left:1px solid #fff"></div>
<div class="a" style="left:1516px;top:572px;width:20px;height:18px;border-top:1px solid #fff;border-left:1px solid #fff"></div>
<div class="a" style="left:1516px;top:591px;width:20px;height:18px;border-top:1px solid #fff;border-left:1px solid #fff"></div>
<div class="a" style="left:1516px;top:610px;width:20px;height:18px;border-top:1px solid #fff;border-left:1px solid #fff"></div>
<div class="a" style="left:1516px;top:629px;width:20px;height:18px;border-top:1px solid #fff;border-left:1px solid #fff"></div>
<div class="a" style="left:1516px;top:648px;width:20px;height:18px;border-top:1px solid #fff;border-left:1px solid #fff"></div>
<div class="a" style="left:1516px;top:667px;width:20px;height:18px;border-top:1px solid #fff;border-left:1px solid #fff"></div>
<div class="t serif" style="left:1538.60px;top:79.27px;font-size:16.30px;color:#000;">1</div>
<div class="t serif" style="left:1606.82px;top:79.27px;font-size:16.30px;color:#000;transform:scaleX(0.938);transform-origin:4.08px 0;">0</div>
<div class="t serif" style="left:1616.27px;top:79.27px;font-size:16.30px;color:#000;">,</div>
<div class="t serif" style="left:1621.00px;top:79.27px;font-size:16.30px;color:#000;">1</div>
<div class="t serif" style="left:1673.12px;top:79.27px;font-size:16.30px;color:#000;transform:scaleX(0.992);transform-origin:3.98px 0;">2</div>
<div class="t serif" style="left:1538.92px;top:98.27px;font-size:16.30px;color:#000;transform:scaleX(0.992);transform-origin:3.98px 0;">2</div>
<div class="t serif" style="left:1606.82px;top:98.27px;font-size:16.30px;color:#000;transform:scaleX(0.938);transform-origin:4.08px 0;">0</div>
<div class="t serif" style="left:1616.27px;top:98.27px;font-size:16.30px;color:#000;">,</div>
<div class="t serif" style="left:1621.32px;top:98.27px;font-size:16.30px;color:#000;transform:scaleX(0.992);transform-origin:3.98px 0;">2</div>
<div class="t serif" style="left:1673.12px;top:98.27px;font-size:16.30px;color:#000;transform:scaleX(0.992);transform-origin:3.98px 0;">2</div>
<div class="t serif" style="left:1538.75px;top:117.27px;font-size:16.30px;color:#000;transform:scaleX(0.962);transform-origin:4.15px 0;">3</div>
<div class="t serif" style="left:1606.82px;top:117.27px;font-size:16.30px;color:#000;transform:scaleX(0.938);transform-origin:4.08px 0;">0</div>
<div class="t serif" style="left:1616.27px;top:117.27px;font-size:16.30px;color:#000;">,</div>
<div class="t serif" style="left:1621.15px;top:117.27px;font-size:16.30px;color:#000;transform:scaleX(0.962);transform-origin:4.15px 0;">3</div>
<div class="t serif" style="left:1673.12px;top:117.27px;font-size:16.30px;color:#000;transform:scaleX(0.992);transform-origin:3.98px 0;">2</div>
<div class="t serif" style="left:1538.79px;top:136.27px;font-size:16.30px;color:#000;transform:scaleX(0.855);transform-origin:4.11px 0;">4</div>
<div class="t serif" style="left:1606.82px;top:136.27px;font-size:16.30px;color:#000;transform:scaleX(0.938);transform-origin:4.08px 0;">0</div>
<div class="t serif" style="left:1616.27px;top:136.27px;font-size:16.30px;color:#000;">,</div>
<div class="t serif" style="left:1621.19px;top:136.27px;font-size:16.30px;color:#000;transform:scaleX(0.855);transform-origin:4.11px 0;">4</div>
<div class="t serif" style="left:1673.12px;top:136.27px;font-size:16.30px;color:#000;transform:scaleX(0.992);transform-origin:3.98px 0;">2</div>
<div class="t serif" style="left:1538.67px;top:155.27px;font-size:16.30px;color:#000;transform:scaleX(0.987);transform-origin:4.23px 0;">5</div>
<div class="t serif" style="left:1606.82px;top:155.27px;font-size:16.30px;color:#000;transform:scaleX(0.938);transform-origin:4.08px 0;">0</div>
<div class="t serif" style="left:1616.27px;top:155.27px;font-size:16.30px;color:#000;">,</div>
<div class="t serif" style="left:1621.07px;top:155.27px;font-size:16.30px;color:#000;transform:scaleX(0.987);transform-origin:4.23px 0;">5</div>
<div class="t serif" style="left:1673.12px;top:155.27px;font-size:16.30px;color:#000;transform:scaleX(0.992);transform-origin:3.98px 0;">2</div>
<div class="t serif" style="left:1538.72px;top:174.27px;font-size:16.30px;color:#000;transform:scaleX(0.930);transform-origin:4.18px 0;">6</div>
<div class="t serif" style="left:1606.82px;top:174.27px;font-size:16.30px;color:#000;transform:scaleX(0.938);transform-origin:4.08px 0;">0</div>
<div class="t serif" style="left:1616.27px;top:174.27px;font-size:16.30px;color:#000;">,</div>
<div class="t serif" style="left:1621.12px;top:174.27px;font-size:16.30px;color:#000;transform:scaleX(0.930);transform-origin:4.18px 0;">6</div>
<div class="t serif" style="left:1673.12px;top:174.27px;font-size:16.30px;color:#000;transform:scaleX(0.992);transform-origin:3.98px 0;">2</div>
<div class="t serif" style="left:1538.52px;top:193.27px;font-size:16.30px;color:#000;transform:scaleX(0.981);transform-origin:4.38px 0;">7</div>
<div class="t serif" style="left:1606.82px;top:193.27px;font-size:16.30px;color:#000;transform:scaleX(0.938);transform-origin:4.08px 0;">0</div>
<div class="t serif" style="left:1616.27px;top:193.27px;font-size:16.30px;color:#000;">,</div>
<div class="t serif" style="left:1620.92px;top:193.27px;font-size:16.30px;color:#000;transform:scaleX(0.981);transform-origin:4.38px 0;">7</div>
<div class="t serif" style="left:1673.12px;top:193.27px;font-size:16.30px;color:#000;transform:scaleX(0.992);transform-origin:3.98px 0;">2</div>
<div class="t serif" style="left:1538.82px;top:212.27px;font-size:16.30px;color:#000;transform:scaleX(0.938);transform-origin:4.08px 0;">8</div>
<div class="t serif" style="left:1606.82px;top:212.27px;font-size:16.30px;color:#000;transform:scaleX(0.938);transform-origin:4.08px 0;">0</div>
<div class="t serif" style="left:1616.27px;top:212.27px;font-size:16.30px;color:#000;">,</div>
<div class="t serif" style="left:1621.22px;top:212.27px;font-size:16.30px;color:#000;transform:scaleX(0.938);transform-origin:4.08px 0;">8</div>
<div class="t serif" style="left:1673.12px;top:212.27px;font-size:16.30px;color:#000;transform:scaleX(0.992);transform-origin:3.98px 0;">2</div>
<div class="t serif" style="left:1538.90px;top:231.27px;font-size:16.30px;color:#000;transform:scaleX(0.932);transform-origin:4.00px 0;">9</div>
<div class="t serif" style="left:1606.82px;top:231.27px;font-size:16.30px;color:#000;transform:scaleX(0.938);transform-origin:4.08px 0;">0</div>
<div class="t serif" style="left:1616.27px;top:231.27px;font-size:16.30px;color:#000;">,</div>
<div class="t serif" style="left:1621.30px;top:231.27px;font-size:16.30px;color:#000;transform:scaleX(0.932);transform-origin:4.00px 0;">9</div>
<div class="t serif" style="left:1673.12px;top:231.27px;font-size:16.30px;color:#000;transform:scaleX(0.992);transform-origin:3.98px 0;">2</div>
<div class="t serif" style="left:1538.60px;top:250.27px;font-size:16.30px;color:#000;">1</div>
<div class="t serif" style="left:1546.02px;top:250.27px;font-size:16.30px;color:#000;transform:scaleX(0.938);transform-origin:4.08px 0;">0</div>
<div class="t serif" style="left:1606.60px;top:250.27px;font-size:16.30px;color:#000;">1</div>
<div class="t serif" style="left:1673.12px;top:250.27px;font-size:16.30px;color:#000;transform:scaleX(0.992);transform-origin:3.98px 0;">2</div>
<div class="t serif" style="left:1538.60px;top:269.27px;font-size:16.30px;color:#000;">1</div>
<div class="t serif" style="left:1545.80px;top:269.27px;font-size:16.30px;color:#000;">1</div>
<div class="t serif" style="left:1606.60px;top:269.27px;font-size:16.30px;color:#000;">1</div>
<div class="t serif" style="left:1616.27px;top:269.27px;font-size:16.30px;color:#000;">,</div>
<div class="t serif" style="left:1621.00px;top:269.27px;font-size:16.30px;color:#000;">1</div>
<div class="t serif" style="left:1673.12px;top:269.27px;font-size:16.30px;color:#000;transform:scaleX(0.992);transform-origin:3.98px 0;">2</div>
<div class="t serif" style="left:1538.60px;top:288.27px;font-size:16.30px;color:#000;">1</div>
<div class="t serif" style="left:1546.12px;top:288.27px;font-size:16.30px;color:#000;transform:scaleX(0.992);transform-origin:3.98px 0;">2</div>
<div class="t serif" style="left:1606.60px;top:288.27px;font-size:16.30px;color:#000;">1</div>
<div class="t serif" style="left:1616.27px;top:288.27px;font-size:16.30px;color:#000;">,</div>
<div class="t serif" style="left:1621.32px;top:288.27px;font-size:16.30px;color:#000;transform:scaleX(0.992);transform-origin:3.98px 0;">2</div>
<div class="t serif" style="left:1673.12px;top:288.27px;font-size:16.30px;color:#000;transform:scaleX(0.992);transform-origin:3.98px 0;">2</div>
<div class="t serif" style="left:1538.60px;top:307.27px;font-size:16.30px;color:#000;">1</div>
<div class="t serif" style="left:1545.95px;top:307.27px;font-size:16.30px;color:#000;transform:scaleX(0.962);transform-origin:4.15px 0;">3</div>
<div class="t serif" style="left:1606.60px;top:307.27px;font-size:16.30px;color:#000;">1</div>
<div class="t serif" style="left:1616.27px;top:307.27px;font-size:16.30px;color:#000;">,</div>
<div class="t serif" style="left:1621.15px;top:307.27px;font-size:16.30px;color:#000;transform:scaleX(0.962);transform-origin:4.15px 0;">3</div>
<div class="t serif" style="left:1673.12px;top:307.27px;font-size:16.30px;color:#000;transform:scaleX(0.992);transform-origin:3.98px 0;">2</div>
<div class="t serif" style="left:1538.60px;top:326.27px;font-size:16.30px;color:#000;">1</div>
<div class="t serif" style="left:1545.99px;top:326.27px;font-size:16.30px;color:#000;transform:scaleX(0.855);transform-origin:4.11px 0;">4</div>
<div class="t serif" style="left:1606.60px;top:326.27px;font-size:16.30px;color:#000;">1</div>
<div class="t serif" style="left:1616.27px;top:326.27px;font-size:16.30px;color:#000;">,</div>
<div class="t serif" style="left:1621.19px;top:326.27px;font-size:16.30px;color:#000;transform:scaleX(0.855);transform-origin:4.11px 0;">4</div>
<div class="t serif" style="left:1673.12px;top:326.27px;font-size:16.30px;color:#000;transform:scaleX(0.992);transform-origin:3.98px 0;">2</div>
<div class="t serif" style="left:1538.60px;top:345.27px;font-size:16.30px;color:#000;">1</div>
<div class="t serif" style="left:1545.87px;top:345.27px;font-size:16.30px;color:#000;transform:scaleX(0.987);transform-origin:4.23px 0;">5</div>
<div class="t serif" style="left:1606.60px;top:345.27px;font-size:16.30px;color:#000;">1</div>
<div class="t serif" style="left:1616.27px;top:345.27px;font-size:16.30px;color:#000;">,</div>
<div class="t serif" style="left:1621.07px;top:345.27px;font-size:16.30px;color:#000;transform:scaleX(0.987);transform-origin:4.23px 0;">5</div>
<div class="t serif" style="left:1673.12px;top:345.27px;font-size:16.30px;color:#000;transform:scaleX(0.992);transform-origin:3.98px 0;">2</div>
<div class="t serif" style="left:1538.60px;top:364.27px;font-size:16.30px;color:#000;">1</div>
<div class="t serif" style="left:1545.92px;top:364.27px;font-size:16.30px;color:#000;transform:scaleX(0.930);transform-origin:4.18px 0;">6</div>
<div class="t serif" style="left:1606.60px;top:364.27px;font-size:16.30px;color:#000;">1</div>
<div class="t serif" style="left:1616.27px;top:364.27px;font-size:16.30px;color:#000;">,</div>
<div class="t serif" style="left:1621.12px;top:364.27px;font-size:16.30px;color:#000;transform:scaleX(0.930);transform-origin:4.18px 0;">6</div>
<div class="t serif" style="left:1673.12px;top:364.27px;font-size:16.30px;color:#000;transform:scaleX(0.992);transform-origin:3.98px 0;">2</div>
<div class="t serif" style="left:1538.60px;top:383.27px;font-size:16.30px;color:#000;">1</div>
<div class="t serif" style="left:1545.72px;top:383.27px;font-size:16.30px;color:#000;transform:scaleX(0.981);transform-origin:4.38px 0;">7</div>
<div class="t serif" style="left:1606.60px;top:383.27px;font-size:16.30px;color:#000;">1</div>
<div class="t serif" style="left:1616.27px;top:383.27px;font-size:16.30px;color:#000;">,</div>
<div class="t serif" style="left:1620.92px;top:383.27px;font-size:16.30px;color:#000;transform:scaleX(0.981);transform-origin:4.38px 0;">7</div>
<div class="t serif" style="left:1673.12px;top:383.27px;font-size:16.30px;color:#000;transform:scaleX(0.992);transform-origin:3.98px 0;">2</div>
<div class="t serif" style="left:1538.60px;top:402.27px;font-size:16.30px;color:#000;">1</div>
<div class="t serif" style="left:1546.02px;top:402.27px;font-size:16.30px;color:#000;transform:scaleX(0.938);transform-origin:4.08px 0;">8</div>
<div class="t serif" style="left:1606.60px;top:402.27px;font-size:16.30px;color:#000;">1</div>
<div class="t serif" style="left:1616.27px;top:402.27px;font-size:16.30px;color:#000;">,</div>
<div class="t serif" style="left:1621.22px;top:402.27px;font-size:16.30px;color:#000;transform:scaleX(0.938);transform-origin:4.08px 0;">8</div>
<div class="t serif" style="left:1673.12px;top:402.27px;font-size:16.30px;color:#000;transform:scaleX(0.992);transform-origin:3.98px 0;">2</div>
<div class="t serif" style="left:1538.60px;top:421.27px;font-size:16.30px;color:#000;">1</div>
<div class="t serif" style="left:1546.10px;top:421.27px;font-size:16.30px;color:#000;transform:scaleX(0.932);transform-origin:4.00px 0;">9</div>
<div class="t serif" style="left:1606.60px;top:421.27px;font-size:16.30px;color:#000;">1</div>
<div class="t serif" style="left:1616.27px;top:421.27px;font-size:16.30px;color:#000;">,</div>
<div class="t serif" style="left:1621.30px;top:421.27px;font-size:16.30px;color:#000;transform:scaleX(0.932);transform-origin:4.00px 0;">9</div>
<div class="t serif" style="left:1673.12px;top:421.27px;font-size:16.30px;color:#000;transform:scaleX(0.992);transform-origin:3.98px 0;">2</div>
<div class="t serif" style="left:1538.92px;top:440.27px;font-size:16.30px;color:#000;transform:scaleX(0.992);transform-origin:3.98px 0;">2</div>
<div class="t serif" style="left:1546.02px;top:440.27px;font-size:16.30px;color:#000;transform:scaleX(0.938);transform-origin:4.08px 0;">0</div>
<div class="t serif" style="left:1606.92px;top:440.27px;font-size:16.30px;color:#000;transform:scaleX(0.992);transform-origin:3.98px 0;">2</div>
<div class="t serif" style="left:1673.12px;top:440.27px;font-size:16.30px;color:#000;transform:scaleX(0.992);transform-origin:3.98px 0;">2</div>
<div class="t serif" style="left:1538.92px;top:459.27px;font-size:16.30px;color:#000;transform:scaleX(0.992);transform-origin:3.98px 0;">2</div>
<div class="t serif" style="left:1545.80px;top:459.27px;font-size:16.30px;color:#000;">1</div>
<div class="t serif" style="left:1606.92px;top:459.27px;font-size:16.30px;color:#000;transform:scaleX(0.992);transform-origin:3.98px 0;">2</div>
<div class="t serif" style="left:1616.27px;top:459.27px;font-size:16.30px;color:#000;">,</div>
<div class="t serif" style="left:1621.00px;top:459.27px;font-size:16.30px;color:#000;">1</div>
<div class="t serif" style="left:1673.12px;top:459.27px;font-size:16.30px;color:#000;transform:scaleX(0.992);transform-origin:3.98px 0;">2</div>
<div class="t serif" style="left:1538.92px;top:478.27px;font-size:16.30px;color:#000;transform:scaleX(0.992);transform-origin:3.98px 0;">2</div>
<div class="t serif" style="left:1546.12px;top:478.27px;font-size:16.30px;color:#000;transform:scaleX(0.992);transform-origin:3.98px 0;">2</div>
<div class="t serif" style="left:1606.92px;top:478.27px;font-size:16.30px;color:#000;transform:scaleX(0.992);transform-origin:3.98px 0;">2</div>
<div class="t serif" style="left:1616.27px;top:478.27px;font-size:16.30px;color:#000;">,</div>
<div class="t serif" style="left:1621.32px;top:478.27px;font-size:16.30px;color:#000;transform:scaleX(0.992);transform-origin:3.98px 0;">2</div>
<div class="t serif" style="left:1673.12px;top:478.27px;font-size:16.30px;color:#000;transform:scaleX(0.992);transform-origin:3.98px 0;">2</div>
<div class="t serif" style="left:1538.92px;top:497.27px;font-size:16.30px;color:#000;transform:scaleX(0.992);transform-origin:3.98px 0;">2</div>
<div class="t serif" style="left:1545.95px;top:497.27px;font-size:16.30px;color:#000;transform:scaleX(0.962);transform-origin:4.15px 0;">3</div>
<div class="t serif" style="left:1606.92px;top:497.27px;font-size:16.30px;color:#000;transform:scaleX(0.992);transform-origin:3.98px 0;">2</div>
<div class="t serif" style="left:1616.27px;top:497.27px;font-size:16.30px;color:#000;">,</div>
<div class="t serif" style="left:1621.15px;top:497.27px;font-size:16.30px;color:#000;transform:scaleX(0.962);transform-origin:4.15px 0;">3</div>
<div class="t serif" style="left:1673.12px;top:497.27px;font-size:16.30px;color:#000;transform:scaleX(0.992);transform-origin:3.98px 0;">2</div>
<div class="t serif" style="left:1538.92px;top:516.27px;font-size:16.30px;color:#000;transform:scaleX(0.992);transform-origin:3.98px 0;">2</div>
<div class="t serif" style="left:1545.99px;top:516.27px;font-size:16.30px;color:#000;transform:scaleX(0.855);transform-origin:4.11px 0;">4</div>
<div class="t serif" style="left:1606.92px;top:516.27px;font-size:16.30px;color:#000;transform:scaleX(0.992);transform-origin:3.98px 0;">2</div>
<div class="t serif" style="left:1616.27px;top:516.27px;font-size:16.30px;color:#000;">,</div>
<div class="t serif" style="left:1621.19px;top:516.27px;font-size:16.30px;color:#000;transform:scaleX(0.855);transform-origin:4.11px 0;">4</div>
<div class="t serif" style="left:1673.12px;top:516.27px;font-size:16.30px;color:#000;transform:scaleX(0.992);transform-origin:3.98px 0;">2</div>
<div class="t serif" style="left:1538.92px;top:535.27px;font-size:16.30px;color:#000;transform:scaleX(0.992);transform-origin:3.98px 0;">2</div>
<div class="t serif" style="left:1545.87px;top:535.27px;font-size:16.30px;color:#000;transform:scaleX(0.987);transform-origin:4.23px 0;">5</div>
<div class="t serif" style="left:1606.92px;top:535.27px;font-size:16.30px;color:#000;transform:scaleX(0.992);transform-origin:3.98px 0;">2</div>
<div class="t serif" style="left:1616.27px;top:535.27px;font-size:16.30px;color:#000;">,</div>
<div class="t serif" style="left:1621.07px;top:535.27px;font-size:16.30px;color:#000;transform:scaleX(0.987);transform-origin:4.23px 0;">5</div>
<div class="t serif" style="left:1673.12px;top:535.27px;font-size:16.30px;color:#000;transform:scaleX(0.992);transform-origin:3.98px 0;">2</div>
<div class="t serif" style="left:1538.92px;top:554.27px;font-size:16.30px;color:#000;transform:scaleX(0.992);transform-origin:3.98px 0;">2</div>
<div class="t serif" style="left:1545.92px;top:554.27px;font-size:16.30px;color:#000;transform:scaleX(0.930);transform-origin:4.18px 0;">6</div>
<div class="t serif" style="left:1606.92px;top:554.27px;font-size:16.30px;color:#000;transform:scaleX(0.992);transform-origin:3.98px 0;">2</div>
<div class="t serif" style="left:1616.27px;top:554.27px;font-size:16.30px;color:#000;">,</div>
<div class="t serif" style="left:1621.12px;top:554.27px;font-size:16.30px;color:#000;transform:scaleX(0.930);transform-origin:4.18px 0;">6</div>
<div class="t serif" style="left:1673.12px;top:554.27px;font-size:16.30px;color:#000;transform:scaleX(0.992);transform-origin:3.98px 0;">2</div>
<div class="t serif" style="left:1538.92px;top:573.27px;font-size:16.30px;color:#000;transform:scaleX(0.992);transform-origin:3.98px 0;">2</div>
<div class="t serif" style="left:1545.72px;top:573.27px;font-size:16.30px;color:#000;transform:scaleX(0.981);transform-origin:4.38px 0;">7</div>
<div class="t serif" style="left:1606.92px;top:573.27px;font-size:16.30px;color:#000;transform:scaleX(0.992);transform-origin:3.98px 0;">2</div>
<div class="t serif" style="left:1616.27px;top:573.27px;font-size:16.30px;color:#000;">,</div>
<div class="t serif" style="left:1620.92px;top:573.27px;font-size:16.30px;color:#000;transform:scaleX(0.981);transform-origin:4.38px 0;">7</div>
<div class="t serif" style="left:1673.12px;top:573.27px;font-size:16.30px;color:#000;transform:scaleX(0.992);transform-origin:3.98px 0;">2</div>
<div class="t serif" style="left:1538.92px;top:592.27px;font-size:16.30px;color:#000;transform:scaleX(0.992);transform-origin:3.98px 0;">2</div>
<div class="t serif" style="left:1546.02px;top:592.27px;font-size:16.30px;color:#000;transform:scaleX(0.938);transform-origin:4.08px 0;">8</div>
<div class="t serif" style="left:1606.92px;top:592.27px;font-size:16.30px;color:#000;transform:scaleX(0.992);transform-origin:3.98px 0;">2</div>
<div class="t serif" style="left:1616.27px;top:592.27px;font-size:16.30px;color:#000;">,</div>
<div class="t serif" style="left:1621.22px;top:592.27px;font-size:16.30px;color:#000;transform:scaleX(0.938);transform-origin:4.08px 0;">8</div>
<div class="t serif" style="left:1673.12px;top:592.27px;font-size:16.30px;color:#000;transform:scaleX(0.992);transform-origin:3.98px 0;">2</div>
<div class="t serif" style="left:1538.92px;top:611.27px;font-size:16.30px;color:#000;transform:scaleX(0.992);transform-origin:3.98px 0;">2</div>
<div class="t serif" style="left:1546.10px;top:611.27px;font-size:16.30px;color:#000;transform:scaleX(0.932);transform-origin:4.00px 0;">9</div>
<div class="t serif" style="left:1606.92px;top:611.27px;font-size:16.30px;color:#000;transform:scaleX(0.992);transform-origin:3.98px 0;">2</div>
<div class="t serif" style="left:1616.27px;top:611.27px;font-size:16.30px;color:#000;">,</div>
<div class="t serif" style="left:1621.30px;top:611.27px;font-size:16.30px;color:#000;transform:scaleX(0.932);transform-origin:4.00px 0;">9</div>
<div class="t serif" style="left:1673.12px;top:611.27px;font-size:16.30px;color:#000;transform:scaleX(0.992);transform-origin:3.98px 0;">2</div>
<div class="t serif" style="left:1538.75px;top:630.27px;font-size:16.30px;color:#000;transform:scaleX(0.962);transform-origin:4.15px 0;">3</div>
<div class="t serif" style="left:1546.02px;top:630.27px;font-size:16.30px;color:#000;transform:scaleX(0.938);transform-origin:4.08px 0;">0</div>
<div class="t serif" style="left:1606.75px;top:630.27px;font-size:16.30px;color:#000;transform:scaleX(0.962);transform-origin:4.15px 0;">3</div>
<div class="t serif" style="left:1673.12px;top:630.27px;font-size:16.30px;color:#000;transform:scaleX(0.992);transform-origin:3.98px 0;">2</div>
<div class="t serif" style="left:1538.75px;top:649.27px;font-size:16.30px;color:#000;transform:scaleX(0.962);transform-origin:4.15px 0;">3</div>
<div class="t serif" style="left:1545.80px;top:649.27px;font-size:16.30px;color:#000;">1</div>
<div class="t serif" style="left:1606.75px;top:649.27px;font-size:16.30px;color:#000;transform:scaleX(0.962);transform-origin:4.15px 0;">3</div>
<div class="t serif" style="left:1616.27px;top:649.27px;font-size:16.30px;color:#000;">,</div>
<div class="t serif" style="left:1621.00px;top:649.27px;font-size:16.30px;color:#000;">1</div>
<div class="t serif" style="left:1673.12px;top:649.27px;font-size:16.30px;color:#000;transform:scaleX(0.992);transform-origin:3.98px 0;">2</div>
<svg class="a" style="left:1520px;top:670px" width="12" height="12"><path d="M5.5 1 V10 M1 5.5 H10 M2.3 2.3 L8.7 8.7 M8.7 2.3 L2.3 8.7" stroke="#000" stroke-width="1.1"/><circle cx="5.5" cy="5.5" r="1.6" fill="#000"/></svg>
<svg class="a" style="left:1540px;top:66px" width="12" height="12"><path d="M0.5 2.5 H8.5 V8.5 H0.5 Z M0.5 5.5 H8.5 M4.5 0 V10.5 H10.5 V9" fill="none" stroke="#000" stroke-width="1.05"/></svg>
<svg class="a" style="left:1553px;top:66px" width="12" height="12"><path d="M0.5 1.5 H10 M0.5 1.5 V11 M5.5 3.5 V11 M2.5 6.5 H9.5 M7.5 8.5 L9 10" fill="none" stroke="#000" stroke-width="1.05"/></svg>
<svg class="a" style="left:1569px;top:66px" width="20" height="12"><path d="M3.3 1 Q0.6 5.5 3.3 10.5 M15.5 1 Q18.2 5.5 15.5 10.5" fill="none" stroke="#000" stroke-width="1.05"/></svg>
<svg class="a" style="left:1576px;top:68px" width="8" height="9"><path d="M0.5 0.5 H2.5 M4 0.5 H6 M1.5 0.5 L3 7.5 L5 0.5" fill="none" stroke="#000" stroke-width="1.05"/></svg>
<svg class="a" style="left:1607px;top:66px" width="12" height="12"><path d="M0.5 2.5 H8.5 V8.5 H0.5 Z M0.5 5.5 H8.5 M4.5 0 V10.5 H10.5 V9" fill="none" stroke="#000" stroke-width="1.05"/></svg>
<svg class="a" style="left:1618.5px;top:66px" width="12" height="12"><path d="M1 1 L2 2 M0.5 4 L2 5.5 M0.5 10.5 L2 8 M7 0 V1.5 M3.5 2.5 H11 M6 2.5 L4.5 5 H10.5 L11 6 M4.5 7 V11 M7 7 V11 M9.5 7 V10 H11" fill="none" stroke="#000" stroke-width="1.05"/></svg>
<svg class="a" style="left:1636px;top:66px" width="20" height="12"><path d="M3.3 1 Q0.6 5.5 3.3 10.5 M15.5 1 Q18.2 5.5 15.5 10.5" fill="none" stroke="#000" stroke-width="1.05"/></svg>
<svg class="a" style="left:1643px;top:68px" width="8" height="9"><path d="M0 7.5 H2 M4 7.5 H6 M1 7.5 L3 0 L5 7.5 M1.8 5 H4.2" fill="none" stroke="#000" stroke-width="1.05"/></svg>
<svg class="a" style="left:1674px;top:66px" width="12" height="12"><path d="M0.5 1.5 H3.5 V10.5 H0.5 Z M0.5 5.5 H3.5 M4 3.5 H11 M9.5 0 V11 L8.5 10.5 M6 6 L7 7.5" fill="none" stroke="#000" stroke-width="1.05"/></svg>
<svg class="a" style="left:1686.5px;top:66px" width="12" height="12"><path d="M1 0 L2 1.5 M0.5 2.5 V11 M3.5 0.5 H10.5 V11 M3.5 4.5 H8.5 V9.5 H3.5 Z M3.5 6.5 H8.5" fill="none" stroke="#000" stroke-width="1.05"/></svg>
<svg class="a" style="left:1703px;top:66px" width="20" height="12"><path d="M3.3 1 Q0.6 5.5 3.3 10.5 M15.5 1 Q18.2 5.5 15.5 10.5" fill="none" stroke="#000" stroke-width="1.05"/></svg>
<svg class="a" style="left:1710px;top:68px" width="8" height="9"><path d="M5 1.2 Q3.5 0 1.8 0.6 Q0.6 1.3 1 2.8 Q1.8 3.8 3.5 4.1 Q5.3 4.7 5 6.3 Q4.3 7.8 2 7.5 Q1 7.3 0.5 6.5" fill="none" stroke="#000" stroke-width="1.05"/></svg>
<div class="a" style="left:1537px;top:65px;width:66px;height:11px;border-top:1px solid #fff;border-left:1px solid #fff"></div>
<div class="a" style="left:1604px;top:65px;width:66px;height:11px;border-top:1px solid #fff;border-left:1px solid #fff"></div>
<div class="a" style="left:1671px;top:65px;width:58px;height:11px;border-top:1px solid #fff;border-left:1px solid #fff"></div>
<div class="a" style="left:1603px;top:65px;width:1px;height:12px;background:#000"></div>
<div class="a" style="left:1670px;top:65px;width:1px;height:12px;background:#000"></div>
<div class="a" style="left:1505px;top:725px;width:90px;height:36px;overflow:hidden"><div class="t serif" style="left:10px;top:6.80px;font-size:20px;line-height:19.2px;color:#000;letter-spacing:-1.3px">Run<br>Count</div></div>
<div class="a" style="left:1611px;top:723px;width:97px;height:27px;background:#fff;border-top:1px solid #a0a0a0;border-left:1px solid #a0a0a0;border-right:1px solid #fff;border-bottom:1px solid #fff"></div>
<div class="a" style="left:1612px;top:724px;width:95px;height:25px;background:#f0f0f0;border-top:1px solid #696969;border-left:1px solid #696969;border-right:1px solid #e3e3e3;border-bottom:1px solid #e3e3e3"></div>
<div class="a" style="left:1690px;top:725px;width:16px;height:23px;background:#f0f0f0;border-top:1px solid #e3e3e3;border-left:1px solid #e3e3e3;border-right:1px solid #696969;border-bottom:1px solid #696969;box-shadow:inset 1px 1px 0 #fff,inset -1px -1px 0 #a0a0a0"></div>
<svg class="a" style="left:1694.5px;top:734.5px" width="7" height="5"><path d="M0 0 H7 L3.5 4.5 Z" fill="#000"/></svg>
<div class="a" style="left:1614px;top:726px;width:11px;height:19px;background:#3399ff"></div>
<div class="t serif" style="left:1615.30px;top:727.91px;font-size:17.00px;color:#fff;">x</div>
<div class="a" style="left:1728px;top:723px;width:87px;height:39px;background:#00ff00;border:1px solid #000;box-shadow:inset 1px 1px 0 #fff,inset -1px -1px 0 #696969,inset -2px -2px 0 #a0a0a0"></div>
<div class="a" style="left:1731px;top:727px;width:81px;height:31px;border:1px dotted #000"></div>
<div class="t serif" style="left:1741.89px;top:729.54px;font-size:27.00px;color:#000;">S</div>
<div class="t serif" style="left:1755.33px;top:729.54px;font-size:27.00px;color:#000;transform:scaleX(0.772);transform-origin:8.27px 0;">T</div>
<div class="t serif" style="left:1767.98px;top:729.54px;font-size:27.00px;color:#000;transform:scaleX(0.695);transform-origin:9.75px 0;">O</div>
<div class="t serif" style="left:1784.50px;top:729.54px;font-size:27.00px;color:#000;transform:scaleX(0.913);transform-origin:7.36px 0;">P</div>
<div class="a" style="left:0px;top:987px;width:634px;height:31px;border-top:1px solid #a0a0a0;border-left:1px solid #a0a0a0;border-right:1px solid #fff;border-bottom:1px solid #fff"></div>
<div class="a" style="left:635px;top:987px;width:631px;height:31px;border-top:1px solid #a0a0a0;border-left:1px solid #a0a0a0;border-right:1px solid #fff;border-bottom:1px solid #fff"></div>
<div class="a" style="left:1268px;top:987px;width:631px;height:31px;border-top:1px solid #a0a0a0;border-left:1px solid #a0a0a0;border-right:1px solid #fff;border-bottom:1px solid #fff"></div>
<div class="t mono" style="left:8.84px;top:996.96px;font-size:14.00px;color:#000;">c</div>
<div class="t mono" style="left:16.73px;top:996.96px;font-size:14.00px;color:#000;">o</div>
<div class="t mono" style="left:24.69px;top:996.96px;font-size:14.00px;color:#000;">m</div>
<div class="t mono" style="left:32.64px;top:996.96px;font-size:14.00px;color:#000;">m</div>
<div class="t mono" style="left:40.54px;top:996.96px;font-size:14.00px;color:#000;">u</div>
<div class="t mono" style="left:48.53px;top:996.96px;font-size:14.00px;color:#000;">n</div>
<div class="t mono" style="left:56.34px;top:996.96px;font-size:14.00px;color:#000;">i</div>
<div class="t mono" style="left:64.49px;top:996.96px;font-size:14.00px;color:#000;">c</div>
<div class="t mono" style="left:72.17px;top:996.96px;font-size:14.00px;color:#000;">a</div>
<div class="t mono" style="left:80.40px;top:996.96px;font-size:14.00px;color:#000;">t</div>
<div class="t mono" style="left:88.14px;top:996.96px;font-size:14.00px;color:#000;">i</div>
<div class="t mono" style="left:96.23px;top:996.96px;font-size:14.00px;color:#000;">o</div>
<div class="t mono" style="left:104.18px;top:996.96px;font-size:14.00px;color:#000;">n</div>
<div class="t mono" style="left:112.13px;top:996.96px;font-size:14.00px;color:#000;">:</div>
<div class="t mono" style="left:120.14px;top:996.96px;font-size:14.00px;color:#000;">c</div>
<div class="t mono" style="left:128.03px;top:996.96px;font-size:14.00px;color:#000;">o</div>
<div class="t mono" style="left:135.98px;top:996.96px;font-size:14.00px;color:#000;">n</div>
<div class="t mono" style="left:143.93px;top:996.96px;font-size:14.00px;color:#000;">n</div>
<div class="t mono" style="left:151.88px;top:996.96px;font-size:14.00px;color:#000;">e</div>
<div class="t mono" style="left:159.89px;top:996.96px;font-size:14.00px;color:#000;">c</div>
<div class="t mono" style="left:167.85px;top:996.96px;font-size:14.00px;color:#000;">t</div>
<div class="t mono" style="left:175.59px;top:996.96px;font-size:14.00px;color:#000;">i</div>
<div class="t mono" style="left:183.68px;top:996.96px;font-size:14.00px;color:#000;">o</div>
<div class="t mono" style="left:191.63px;top:996.96px;font-size:14.00px;color:#000;">n</div>
<div class="t mono" style="left:207.39px;top:996.96px;font-size:14.00px;color:#000;">i</div>
<div class="t mono" style="left:215.48px;top:996.96px;font-size:14.00px;color:#000;">s</div>
<div class="t mono" style="left:231.38px;top:996.96px;font-size:14.00px;color:#000;">s</div>
<div class="t mono" style="left:239.29px;top:996.96px;font-size:14.00px;color:#000;">u</div>
<div class="t mono" style="left:247.34px;top:996.96px;font-size:14.00px;color:#000;">c</div>
<div class="t mono" style="left:255.29px;top:996.96px;font-size:14.00px;color:#000;">c</div>
<div class="t mono" style="left:263.18px;top:996.96px;font-size:14.00px;color:#000;">e</div>
<div class="t mono" style="left:271.13px;top:996.96px;font-size:14.00px;color:#000;">s</div>
<div class="t mono" style="left:279.08px;top:996.96px;font-size:14.00px;color:#000;">s</div>
<div class="t mono" style="left:287.00px;top:996.96px;font-size:14.00px;color:#000;">f</div>
<div class="t mono" style="left:294.94px;top:996.96px;font-size:14.00px;color:#000;">u</div>
<div class="t mono" style="left:302.40px;top:996.96px;font-size:14.00px;color:#000;">l</div>
<div class="t mono" style="left:642.78px;top:996.96px;font-size:14.00px;color:#000;transform:scaleX(0.905);transform-origin:4.20px 0;">Y</div>
<div class="t mono" style="left:650.73px;top:996.96px;font-size:14.00px;color:#000;">H</div>
<div class="t mono" style="left:658.68px;top:996.96px;font-size:14.00px;color:#000;">-</div>
<div class="t mono" style="left:666.63px;top:996.96px;font-size:14.00px;color:#000;">3</div>
<div class="t mono" style="left:674.58px;top:996.96px;font-size:14.00px;color:#000;">0</div>
<div class="t mono" style="left:682.53px;top:996.96px;font-size:14.00px;color:#000;">5</div>
<div class="t mono" style="left:690.28px;top:996.96px;font-size:14.00px;color:#000;">D</div>
<div class="t mono" style="left:698.13px;top:996.96px;font-size:14.00px;color:#000;">B</div>
<div class="t mono" style="left:1275.78px;top:996.96px;font-size:14.00px;color:#000;transform:scaleX(0.866);transform-origin:4.20px 0;">V</div>
<div class="t mono" style="left:1283.73px;top:996.96px;font-size:14.00px;color:#000;">e</div>
<div class="t mono" style="left:1291.48px;top:996.96px;font-size:14.00px;color:#000;">r</div>
<div class="t mono" style="left:1299.63px;top:996.96px;font-size:14.00px;color:#000;">s</div>
<div class="t mono" style="left:1307.44px;top:996.96px;font-size:14.00px;color:#000;">i</div>
<div class="t mono" style="left:1315.53px;top:996.96px;font-size:14.00px;color:#000;">o</div>
<div class="t mono" style="left:1323.48px;top:996.96px;font-size:14.00px;color:#000;">n</div>
<div class="t mono" style="left:1331.43px;top:996.96px;font-size:14.00px;color:#000;">:</div>
<div class="t mono" style="left:1347.16px;top:996.96px;font-size:14.00px;color:#000;">1</div>
<div class="t mono" style="left:1355.28px;top:996.96px;font-size:14.00px;color:#000;">.</div>
<div class="t mono" style="left:1363.23px;top:996.96px;font-size:14.00px;color:#000;">0</div>
</body></html>
